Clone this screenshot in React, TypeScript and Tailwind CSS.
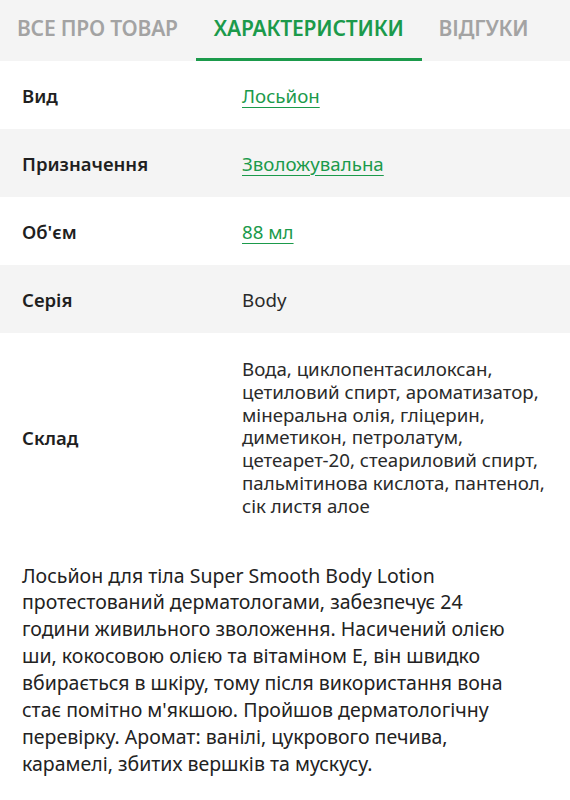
import React from 'react';

interface Spec {
  label: string;
  value: string[];
  link?: boolean;
}

const specs: Spec[] = [
  { label: 'Вид', value: ['Лосьйон'], link: true },
  { label: 'Призначення', value: ['Зволожувальна'], link: true },
  { label: "Об'єм", value: ['88 мл'], link: true },
  { label: 'Серія', value: ['Body'] },
  {
    label: 'Склад',
    value: [
      'Вода, циклопентасилоксан,',
      'цетиловий спирт, ароматизатор,',
      'мінеральна олія, гліцерин,',
      'диметикон, петролатум,',
      'цетеарет-20, стеариловий спирт,',
      'пальмітинова кислота, пантенол,',
      'сік листя алое',
    ],
  },
];

const description = [
  'Лосьйон для тіла Super Smooth Body Lotion',
  'протестований дерматологами, забезпечує 24',
  'години живильного зволоження. Насичений олією',
  'ши, кокосовою олією та вітаміном Е, він швидко',
  'вбирається в шкіру, тому після використання вона',
  "стає помітно м'якшою. Пройшов дерматологічну",
  'перевірку. Аромат: ванілі, цукрового печива,',
  'карамелі, збитих вершків та мускусу.',
];

const App: React.FC = () => {
  return (
    <div className="w-[570px] bg-white text-[#222] font-['Noto_Sans',sans-serif]">
      <div className="flex h-[61px] bg-[#f4f4f4] pl-[17px] text-[21px] font-semibold tracking-[-0.2px] whitespace-nowrap">
        <div className="flex items-center pb-[4px] text-[#a3a3a3]">ВСЕ ПРО ТОВАР</div>
        <div className="ml-[18px] flex items-center border-b-[3px] border-[#1b9a4b] px-[18px] pb-[1px] text-[#1b9a4b]">
          ХАРАКТЕРИСТИКИ
        </div>
        <div className="ml-[17px] flex items-center pb-[4px] text-[#a3a3a3]">ВІДГУКИ</div>
      </div>

      <div>
        {specs.map((s, i) => (
          <div
            key={s.label}
            className={`flex items-center ${i % 2 === 1 ? 'bg-[#f4f4f4]' : 'bg-white'} ${
              s.value.length > 1 ? 'py-[25px]' : 'h-[68px] pt-[2px]'
            }`}
          >
            <div className="w-[242px] pl-[22px] text-[18.5px] font-semibold text-[#1f1f1f]">{s.label}</div>
            <div className="flex-1 whitespace-nowrap text-[18.7px] leading-[22.8px] text-[#2a2a2a]">
              {s.link ? (
                <span className="text-[#1b9a4b] underline decoration-[1px] underline-offset-[4px]">{s.value[0]}</span>
              ) : (
                s.value.map((line) => <div key={line}>{line}</div>)
              )}
            </div>
          </div>
        ))}
      </div>

      <p className="px-[22px] pt-[20px] text-[19.5px] leading-[26.9px] whitespace-nowrap text-[#222]">
        {description.map((line) => (
          <span key={line} className="block">
            {line}
          </span>
        ))}
      </p>
    </div>
  );
};

export default App;
